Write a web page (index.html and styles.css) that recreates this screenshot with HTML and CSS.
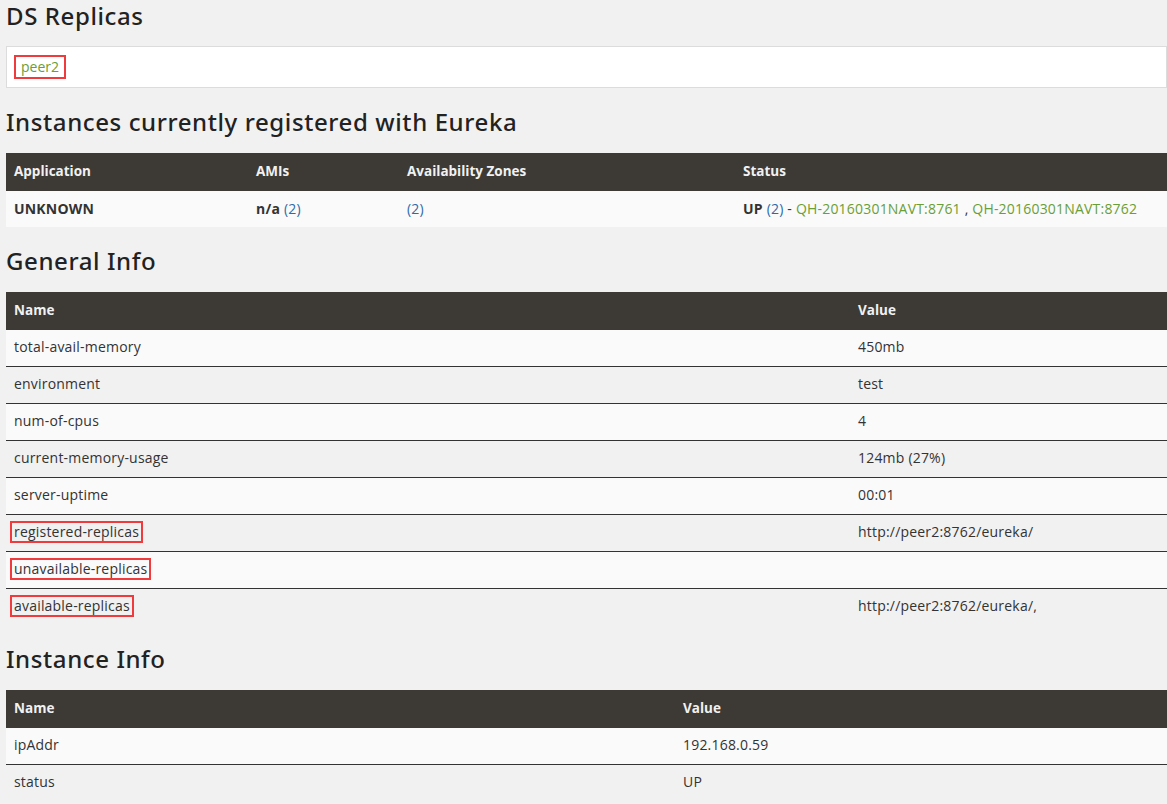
FILE: index.html
```html
<!DOCTYPE html>
<html>
<head>
<meta charset="utf-8">
<link rel="stylesheet" href="styles.css">
</head>
<body>
<div class="page">
  <h2 class="first">DS Replicas</h2>
  <div class="replicas"><a class="link mark-box">peer2</a></div>

  <h2>Instances currently registered with Eureka</h2>
  <table class="tbl apps">
    <thead>
      <tr><th class="c1">Application</th><th class="c2">AMIs</th><th class="c3">Availability Zones</th><th>Status</th></tr>
    </thead>
    <tbody>
      <tr>
        <td><b>UNKNOWN</b></td>
        <td><b>n/a</b> <span class="num">(2)</span></td>
        <td><span class="num">(2)</span></td>
        <td><b>UP</b> <span class="num">(2)</span> - <a class="link">QH-20160301NAVT:8761</a> , <a class="link">QH-20160301NAVT:8762</a></td>
      </tr>
    </tbody>
  </table>

  <h2>General Info</h2>
  <table class="tbl general">
    <thead>
      <tr><th class="g1">Name</th><th>Value</th></tr>
    </thead>
    <tbody>
      <tr><td>total-avail-memory</td><td>450mb</td></tr>
      <tr><td>environment</td><td>test</td></tr>
      <tr><td>num-of-cpus</td><td>4</td></tr>
      <tr><td>current-memory-usage</td><td>124mb (27%)</td></tr>
      <tr><td>server-uptime</td><td>00:01</td></tr>
      <tr><td><span class="mark">registered-replicas</span></td><td>http://peer2:8762/eureka/</td></tr>
      <tr><td><span class="mark">unavailable-replicas</span></td><td></td></tr>
      <tr><td><span class="mark">available-replicas</span></td><td>http://peer2:8762/eureka/,</td></tr>
    </tbody>
  </table>

  <h2>Instance Info</h2>
  <table class="tbl instance">
    <thead>
      <tr><th class="i1">Name</th><th>Value</th></tr>
    </thead>
    <tbody>
      <tr><td>ipAddr</td><td>192.168.0.59</td></tr>
      <tr><td>status</td><td>UP</td></tr>
    </tbody>
  </table>
</div>
</body>
</html>
```
FILE: styles.css
```css
html, body {
  margin: 0;
  padding: 0;
  background: #f1f1f1;
}
body {
  font-family: "Open Sans", "Liberation Sans", sans-serif;
  font-size: 14px;
  color: #333;
}
.page {
  padding: 0 0 0 6px;
}
h2 {
  font-family: "Noto Sans", "Open Sans", sans-serif;
  font-weight: 500;
  font-size: 24px;
  line-height: 32px;
  letter-spacing: 0.6px;
  color: #222;
  margin: 18px 0 15px 0;
}
h2.first {
  margin-top: 0;
  margin-bottom: 14px;
}
.replicas {
  background: #fff;
  border: 1px solid #dcdcdc;
  height: 40px;
  padding: 0 8px;
  display: flex;
  align-items: center;
  margin-bottom: 18px;
}
.replicas + h2 {
  margin-top: 0;
}
.link {
  color: #6a9e36;
  text-decoration: none;
}
.num {
  color: #2f6aa8;
}
.mark-box {
  display: inline-block;
  line-height: 20px;
  padding: 0 5px;
  outline: 2px solid #f03a3c;
  outline-offset: 0;
  margin-left: 1px;
  margin-top: -1px;
}
.mark {
  display: inline-block;
  line-height: 14px;
  outline: 2px solid #f03a3c;
  outline-offset: 2px;
}
.tbl {
  width: 100%;
  border-collapse: collapse;
  table-layout: fixed;
}
.tbl th {
  background: #3d3a35;
  color: #f1f1f1;
  font-weight: bold;
  font-size: 13.5px;
  text-align: left;
  height: 38px;
  padding: 0 8px 3px;
  box-sizing: border-box;
}
.tbl td {
  height: 36px;
  box-sizing: border-box;
  padding: 0 8px 2px;
  text-align: left;
  white-space: nowrap;
  letter-spacing: 0.2px;
}
.tbl tbody tr:nth-child(odd) td {
  background: #fafafa;
}
.tbl tbody tr:nth-child(even) td {
  background: #f1f1f1;
}
.tbl tbody tr + tr td {
  border-top: 1px solid #333;
  height: 37px;
}
.apps .c1 { width: 242px; }
.apps .c2 { width: 151px; }
.apps .c3 { width: 336px; }
.general .g1 { width: 844px; }
.instance .i1 { width: 669px; }
```
